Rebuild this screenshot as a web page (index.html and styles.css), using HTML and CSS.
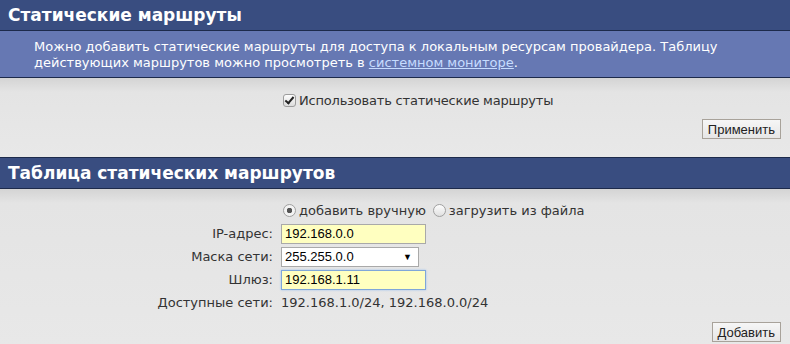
FILE: index.html
```html
<!DOCTYPE html>
<html lang="ru">
<head>
    <meta charset="UTF-8">
    <title>Статические маршруты</title>
    <link rel="stylesheet" href="styles.css">
</head>
<body>
    <div class="section">
        <h2 class="section-title">Статические маршруты</h2>
        <div class="note">
            <span>Можно добавить статические маршруты для доступа к локальным ресурсам провайдера. Таблицу</span><br>
            <span>действующих маршрутов можно просмотреть в</span> <a href="#">системном мониторе</a>.
        </div>
        <div class="panel panel-first">
            <div class="form-grid">
                <span></span>
                <label class="check"><input type="checkbox" checked>Использовать статические маршруты</label>
            </div>
            <div class="actions actions-first">
                <button type="button">Применить</button>
            </div>
        </div>
    </div>

    <div class="section">
        <h2 class="section-title second">Таблица статических маршрутов</h2>
        <div class="panel panel-second">
            <div class="form-grid rows">
                <span></span>
                <div class="radios">
                    <label><input type="radio" name="mode" checked>добавить вручную</label>
                    <label><input type="radio" name="mode">загрузить из файла</label>
                </div>

                <label class="lbl" for="ip">IP-адрес:</label>
                <div><input class="field filled" id="ip" type="text" value="192.168.0.0"></div>

                <label class="lbl">Маска сети:</label>
                <div>
                    <div class="select">
                        <span>255.255.0.0</span>
                        <span class="arrow">▼</span>
                    </div>
                </div>

                <label class="lbl" for="gw">Шлюз:</label>
                <div><input class="field filled focused" id="gw" type="text" value="192.168.1.11"></div>

                <span class="lbl">Доступные сети:</span>
                <span>192.168.1.0/24, 192.168.0.0/24</span>
            </div>
            <div class="actions actions-second">
                <button type="button">Добавить</button>
            </div>
        </div>
    </div>
</body>
</html>
```

FILE: styles.css
```css
body {
    margin: 0;
    font-family: "DejaVu Sans", Verdana, sans-serif;
    font-size: 13px;
    color: #333;
    background-color: #e7e7e7;
}

.section-title {
    margin: 0;
    height: 30px;
    line-height: 30px;
    padding-left: 8px;
    font-size: 17px;
    font-weight: bold;
    color: #fff;
    background-color: #394d80;
    border-bottom: 1px solid #1d2a4b;
}

.section-title.second {
    border-top: 1px solid #1d2a4b;
}

.note {
    padding: 8px 10px 6px 34px;
    line-height: 16px;
    color: #fff;
    background-color: #6678b3;
    border-bottom: 1px solid #1d2a4b;
}

.note a {
    color: #c6dcff;
}

.panel {
    background: linear-gradient(#d4d4d4, #e4e4e4 14px, #e8e8e8);
}

.panel-first {
    padding-top: 14px;
}

.panel-second {
    padding-top: 10px;
}

.form-grid {
    display: grid;
    grid-template-columns: 273px 1fr;
    column-gap: 8px;
    align-items: center;
}

.check {
    display: flex;
    align-items: center;
    height: 16px;
    letter-spacing: -0.2px;
}

.check input {
    appearance: none;
    position: relative;
    box-sizing: border-box;
    margin: 0 3px 0 2px;
    width: 13px;
    height: 13px;
    border: 1px solid #9c9c9c;
    border-radius: 3px;
    background: linear-gradient(#fdfdfd, #dcdcdc);
}

.check input:checked::after {
    content: "";
    position: absolute;
    left: 3px;
    top: 0;
    width: 3px;
    height: 7px;
    border: solid #222;
    border-width: 0 2px 2px 0;
    transform: rotate(40deg);
}

.radios input {
    appearance: none;
    box-sizing: border-box;
    margin: 0 3px 0 2px;
    width: 13px;
    height: 13px;
    border: 1px solid #a0a0a0;
    border-radius: 50%;
    background: linear-gradient(#fdfdfd, #e0e0e0);
}

.radios input:checked {
    background: radial-gradient(circle, #555 0 2.5px, #f3f3f3 3px);
}

.rows {
    grid-auto-rows: 23px;
}

.radios {
    display: flex;
    gap: 5px;
}

.radios label {
    display: flex;
    align-items: center;
}

.lbl {
    text-align: right;
}

.field {
    box-sizing: border-box;
    width: 145px;
    height: 20px;
    padding: 0 3px;
    font-family: "Liberation Sans", Arial, sans-serif;
    font-size: 13px;
    color: #000;
    border: 1px solid #a9a9a9;
    margin: 0;
}

.filled {
    background-color: #ffffc0;
}

.focused {
    border-color: #7fa6d9;
    box-shadow: 0 0 2px #9cc0ee;
    outline: none;
}

.select {
    box-sizing: border-box;
    width: 138px;
    height: 20px;
    display: flex;
    justify-content: space-between;
    align-items: center;
    padding: 0 6px 0 3px;
    font-family: "Liberation Sans", Arial, sans-serif;
    color: #000;
    background-color: #fff;
    border: 1px solid #a9a9a9;
}

.arrow {
    font-size: 9px;
}

.actions {
    display: flex;
    justify-content: flex-end;
    padding-right: 9px;
}

.actions-first {
    padding-top: 11px;
    padding-bottom: 18px;
}

.actions-second {
    padding-top: 8px;
    padding-bottom: 4px;
}

button {
    height: 20px;
    padding: 0 5px;
    font-family: "Liberation Sans", Arial, sans-serif;
    font-size: 13px;
    color: #222;
    background: linear-gradient(#f6f6f6, #e6e6e6);
    border: 1px solid #a8a29a;
    border-radius: 0;
}
```
